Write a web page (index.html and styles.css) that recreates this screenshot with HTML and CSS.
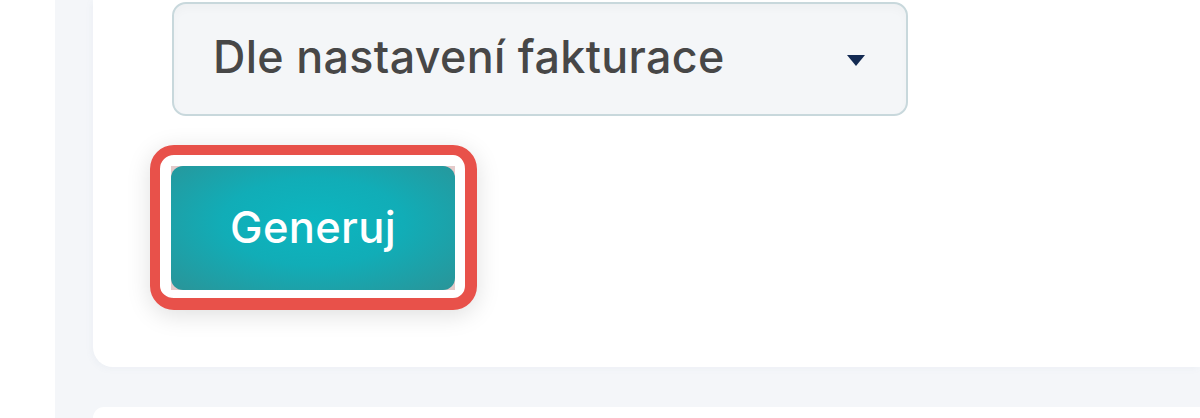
FILE: index.html
```html
<!DOCTYPE html>
<html lang="cs">
<head>
<meta charset="utf-8">
<title>Generuj</title>
<link rel="stylesheet" href="styles.css">
</head>
<body>
<div class="page">
  <div class="edge"></div>
  <main class="main">
    <section class="card card-top">
      <div class="select">
        <span class="select-text">Dle nastavení fakturace</span>
        <span class="caret"></span>
      </div>
      <div class="highlight">
        <div class="btn-bed">
          <button class="btn" type="button">Generuj</button>
        </div>
      </div>
    </section>
    <section class="card card-next"></section>
  </main>
</div>
</body>
</html>
```
FILE: styles.css
```css
html, body {
  margin: 0;
  padding: 0;
  background: #ffffff;
  font-family: Inter, "Noto Sans", sans-serif;
}
.page {
  display: flex;
  height: 418px;
  overflow: hidden;
}
.edge {
  width: 55px;
  flex: none;
  background: #ffffff;
}
.main {
  flex: 1;
  background: #f4f6f9;
  padding-left: 38px;
  display: flex;
  flex-direction: column;
  gap: 40px;
}
.card {
  background: #ffffff;
}
.card-top {
  border-radius: 0 0 0 20px;
  padding: 2px 0 57px 57px;
  box-shadow: -2px 2px 6px rgba(120, 140, 170, 0.05);
}
.card-next {
  flex: 1;
  border-radius: 12px 0 0 0;
}
.select {
  box-sizing: border-box;
  width: 736px;
  height: 114px;
  margin-left: 22px;
  border: 2px solid #c8d8dc;
  border-radius: 14px;
  background: #f4f6f8;
  box-shadow: inset 0 5px 8px rgba(0, 0, 0, 0.025);
  display: flex;
  align-items: center;
  justify-content: space-between;
  padding: 0 41px 4px 39px;
}
.select-text {
  font-size: 44.8px;
  font-weight: 500;
  color: #474747;
  letter-spacing: 0.35px;
}
.caret {
  width: 0;
  height: 0;
  border-left: 9.5px solid transparent;
  border-right: 9.5px solid transparent;
  border-top: 11px solid #132a52;
  margin-top: 6px;
}
.highlight {
  display: inline-block;
  margin-top: 29px;
  border: 10px solid #e8514a;
  border-right-width: 12px;
  border-bottom-width: 12px;
  border-radius: 24px;
  background: #ffffff;
  padding: 11px 10px 8px 11px;
  box-shadow: 0 5px 24px rgba(0, 0, 0, 0.13);
}
.btn-bed {
  background: #e4caca;
  display: flex;
}
.btn {
  width: 284px;
  height: 124px;
  border: none;
  border-radius: 12px;
  background: radial-gradient(ellipse at 50% 45%, #0bb6c0 0%, #11adb7 45%, #2a9498 100%);
  color: #ffffff;
  font-family: Inter, "Noto Sans", sans-serif;
  font-size: 43.5px;
  font-weight: 500;
  padding: 0 0 2px 0;
  letter-spacing: 0.3px;
}
```
